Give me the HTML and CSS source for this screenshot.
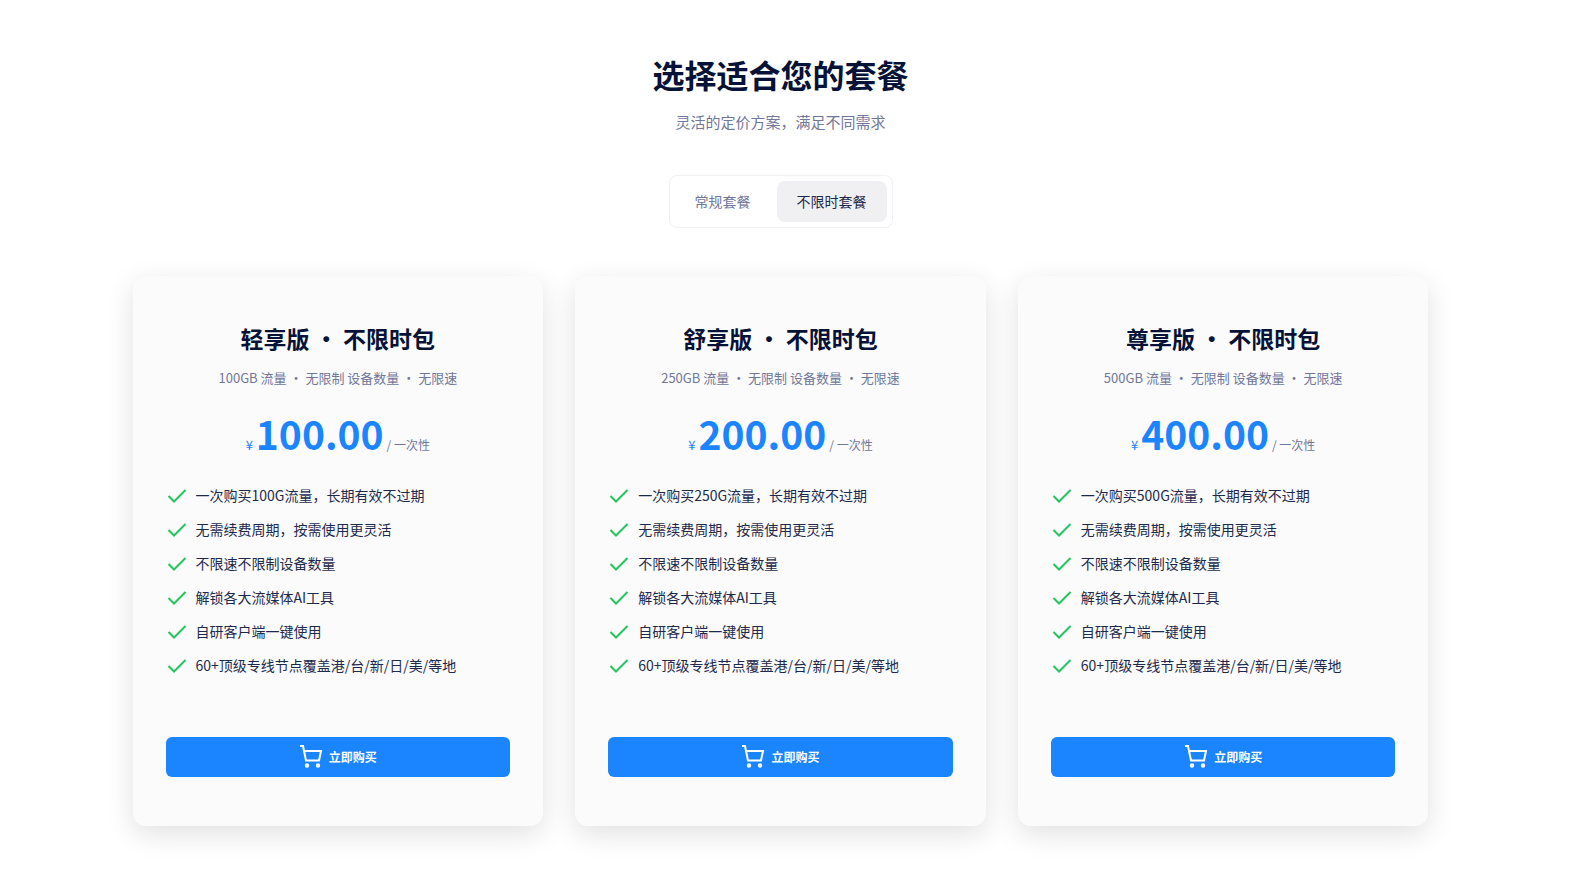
FILE: index.html
```html
<!DOCTYPE html>
<html lang="zh-CN">
	<head>
		<meta charset="utf-8">
		<meta name="viewport" content="width=device-width, initial-scale=1">
		<title>选择适合您的套餐</title>
		<link rel="stylesheet" href="styles.css">
	</head>
	<body>
		<svg class="sprite" aria-hidden="true">
			<symbol id="check" viewBox="0 0 24 24">
				<path d="M2.5 13l5.5 5.5L19.5 7"/>
			</symbol>
			<symbol id="cart" viewBox="0 0 24 24">
				<path d="M1 2h3l3 14.5h13l2-9.5H5"/>
				<circle cx="8" cy="21.5" r="1.2"/>
				<circle cx="19" cy="21.5" r="1.2"/>
			</symbol>
		</svg>
		<main class="pricing">
			<header class="head">
				<h1>选择适合您的套餐</h1>
				<p>灵活的定价方案，满足不同需求</p>
			</header>
			<div class="tabs" role="tablist">
				<button type="button" class="tab" role="tab" aria-selected="false">常规套餐</button>
				<button type="button" class="tab active" role="tab" aria-selected="true">不限时套餐</button>
			</div>
			<div class="plans">
				<section class="card">
					<h2>轻享版 · 不限时包</h2>
					<p class="desc">100GB 流量 · 无限制 设备数量 · 无限速</p>
					<p class="price"><span class="unit">¥</span><strong>100.00</strong><span class="cycle">/ 一次性</span></p>
					<ul class="features">
						<li><svg class="icon"><use href="#check"/></svg>一次购买100G流量，长期有效不过期</li>
						<li><svg class="icon"><use href="#check"/></svg>无需续费周期，按需使用更灵活</li>
						<li><svg class="icon"><use href="#check"/></svg>不限速不限制设备数量</li>
						<li><svg class="icon"><use href="#check"/></svg>解锁各大流媒体AI工具</li>
						<li><svg class="icon"><use href="#check"/></svg>自研客户端一键使用</li>
						<li><svg class="icon"><use href="#check"/></svg>60+顶级专线节点覆盖港/台/新/日/美/等地</li>
					</ul>
					<button type="button" class="buy"><svg class="icon"><use href="#cart"/></svg>立即购买</button>
				</section>
				<section class="card">
					<h2>舒享版 · 不限时包</h2>
					<p class="desc">250GB 流量 · 无限制 设备数量 · 无限速</p>
					<p class="price"><span class="unit">¥</span><strong>200.00</strong><span class="cycle">/ 一次性</span></p>
					<ul class="features">
						<li><svg class="icon"><use href="#check"/></svg>一次购买250G流量，长期有效不过期</li>
						<li><svg class="icon"><use href="#check"/></svg>无需续费周期，按需使用更灵活</li>
						<li><svg class="icon"><use href="#check"/></svg>不限速不限制设备数量</li>
						<li><svg class="icon"><use href="#check"/></svg>解锁各大流媒体AI工具</li>
						<li><svg class="icon"><use href="#check"/></svg>自研客户端一键使用</li>
						<li><svg class="icon"><use href="#check"/></svg>60+顶级专线节点覆盖港/台/新/日/美/等地</li>
					</ul>
					<button type="button" class="buy"><svg class="icon"><use href="#cart"/></svg>立即购买</button>
				</section>
				<section class="card">
					<h2>尊享版 · 不限时包</h2>
					<p class="desc">500GB 流量 · 无限制 设备数量 · 无限速</p>
					<p class="price"><span class="unit">¥</span><strong>400.00</strong><span class="cycle">/ 一次性</span></p>
					<ul class="features">
						<li><svg class="icon"><use href="#check"/></svg>一次购买500G流量，长期有效不过期</li>
						<li><svg class="icon"><use href="#check"/></svg>无需续费周期，按需使用更灵活</li>
						<li><svg class="icon"><use href="#check"/></svg>不限速不限制设备数量</li>
						<li><svg class="icon"><use href="#check"/></svg>解锁各大流媒体AI工具</li>
						<li><svg class="icon"><use href="#check"/></svg>自研客户端一键使用</li>
						<li><svg class="icon"><use href="#check"/></svg>60+顶级专线节点覆盖港/台/新/日/美/等地</li>
					</ul>
					<button type="button" class="buy"><svg class="icon"><use href="#cart"/></svg>立即购买</button>
				</section>
			</div>
		</main>
	</body>
</html>
```
FILE: styles.css
```css
*{margin: 0;padding: 0;box-sizing: border-box;}
body{
	padding-right: 18px;
	background: #fff;
	color: #1d2a4d;
	font-family: "Noto Sans CJK SC", sans-serif;
	font-size: 14px;
	line-height: 22px;
}
button{
	border: 0;
	font-family: inherit;
	cursor: pointer;
}
.sprite{
	display: none;
}
.icon{
	flex: none;
	width: 24px;
	height: 24px;
	fill: none;
	stroke: currentColor;
	stroke-width: 2;
}
.pricing{
	display: flex;
	flex-direction: column;
	align-items: center;
	max-width: 1360px;
	margin: 0 auto;
	padding: 50px 32px;
}
.head{
	text-align: center;
}
.head h1{
	color: #061237;
	font-size: 32px;
	line-height: 48px;
}
.head p{
	margin-top: 13px;
	color: #71779a;
	font-size: 15px;
}
.tabs{
	display: flex;
	gap: 6px;
	margin-top: 42px;
	padding: 5px;
	border: 1px solid #f1f1f3;
	border-radius: 8px;
}
.tab{
	height: 41px;
	padding: 0 20px 2px;
	border-radius: 8px;
	background: none;
	color: #71779a;
	font-size: 14px;
}
.tab.active{
	background: #f0f0f3;
	color: #1d2a4d;
}
.plans{
	display: grid;
	grid-template-columns: repeat(3, 1fr);
	gap: 32px;
	width: 100%;
	margin-top: 48px;
}
.card{
	padding: 48px 32px;
	border: 1px solid #fbfbfb;
	border-radius: 12px;
	background: #fbfbfb;
	box-shadow: 0 8px 28px rgba(0,0,0,0.12);
}
.card h2{
	color: #061237;
	font-size: 23px;
	line-height: 26px;
	text-align: center;
}
.desc{
	margin-top: 17px;
	color: #71779a;
	font-size: 13px;
	line-height: 20px;
	text-align: center;
}
.price{
	display: flex;
	justify-content: center;
	align-items: baseline;
	gap: 3px;
	margin: 21px 0 27px;
	color: #1b84ff;
	font-size: 13px;
}
.price strong{
	font-size: 39px;
	line-height: 48px;
}
.cycle{
	color: #71779a;
	font-size: 12px;
}
.features{
	display: flex;
	flex-direction: column;
	gap: 12px;
	list-style: none;
}
.features li{
	display: flex;
	align-items: center;
	gap: 6px;
	height: 22px;
}
.features .icon{
	color: #22c55e;
}
.buy{
	display: flex;
	justify-content: center;
	align-items: center;
	gap: 6px;
	width: 100%;
	height: 40px;
	margin-top: 61px;
	padding-bottom: 2px;
	border-radius: 6px;
	background: #1b84ff;
	color: #fff;
	font-size: 12px;
	font-weight: bold;
}
```
